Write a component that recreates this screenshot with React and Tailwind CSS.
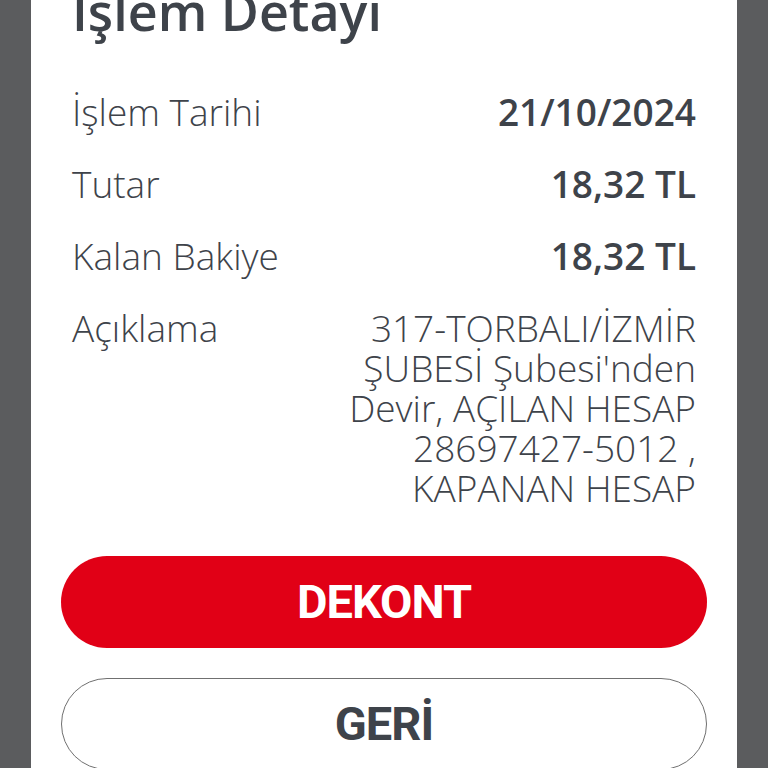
import React from "react";

const rows = [
  { label: "İşlem Tarihi", value: "21/10/2024" },
  { label: "Tutar", value: "18,32 TL" },
  { label: "Kalan Bakiye", value: "18,32 TL" },
];

const App = () => {
  return (
    <div className="w-full h-[768px] bg-[#5b5c5e] flex justify-center overflow-hidden font-['Open_Sans',sans-serif]">
      <div className="w-[706px] h-full bg-white px-[41px] flex flex-col text-[#3e434a]">
        {/* Title */}
        <h1 className="text-[52px] leading-[52px] font-semibold mt-[-15px]">
          İşlem Detayı
        </h1>

        {/* Detail rows */}
        <div className="flex flex-col mt-[39px]">
          {rows.map((row) => (
            <div key={row.label} className="h-[72px] flex items-center justify-between text-[37px]">
              <span className="font-light">{row.label}</span>
              <span className="font-semibold">{row.value}</span>
            </div>
          ))}

          <div className="flex justify-between text-[37px] leading-[40px] pt-[16px] font-light">
            <span>Açıklama</span>
            <span className="w-[400px] text-right">
              317-TORBALI/İZMİR ŞUBESİ Şubesi'nden Devir, AÇILAN HESAP 28697427-5012 , KAPANAN HESAP
            </span>
          </div>
        </div>

        {/* Buttons */}
        <div className="flex flex-col gap-[30px] mx-[-11px] mt-[48px] font-['Roboto',sans-serif]">
          <button className="h-[92px] w-full rounded-full bg-[#e10016] text-white text-[47px] font-bold tracking-[-1px]">
            DEKONT
          </button>
          <button className="h-[92px] w-full rounded-full border border-[#707070] bg-white text-[#3e434a] text-[47px] font-bold tracking-[-1px]">
            GERİ
          </button>
        </div>
      </div>
    </div>
  );
};

export default App;
